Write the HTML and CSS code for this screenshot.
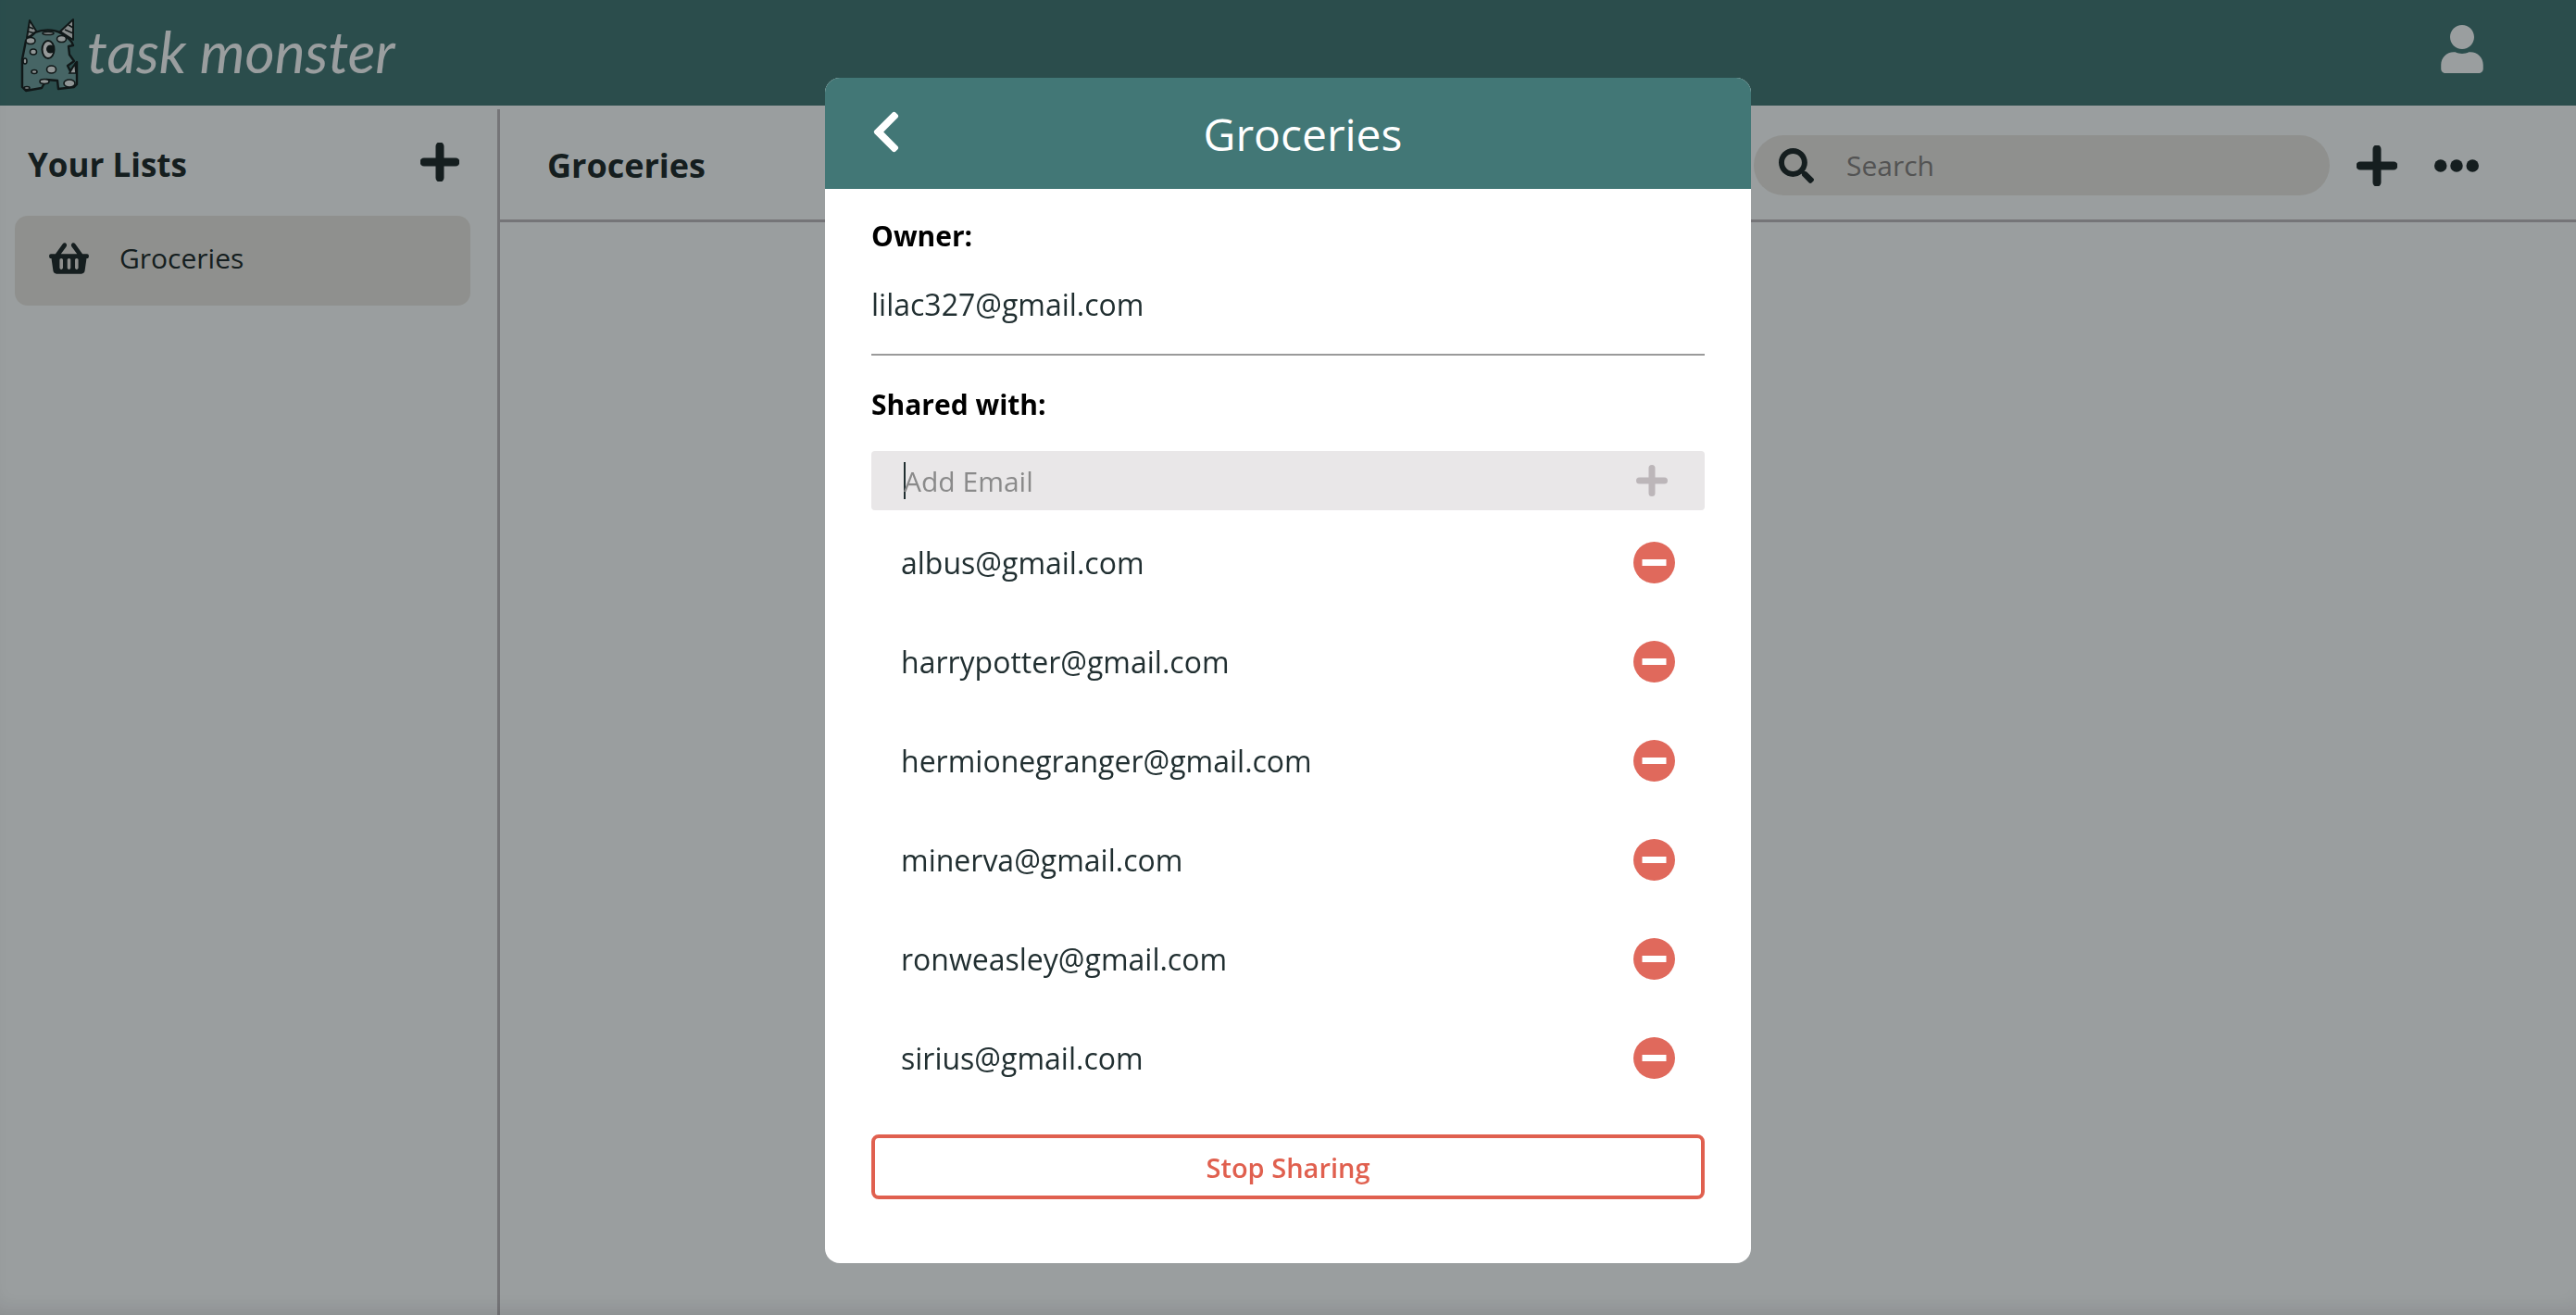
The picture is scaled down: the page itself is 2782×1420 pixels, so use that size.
FILE: index.html
```html
<!DOCTYPE html>
<html lang="en">
<head>
    <meta charset="UTF-8">
    <meta name="viewport" content="width=device-width, initial-scale=1.0">
    <title>Task Monster</title>
    <link rel="stylesheet" href="styles.css">
</head>
<body>
    <header class="topbar">
        <div class="brand">
            <svg class="monster" viewBox="20 10 66 84" width="66" height="84">
                <!-- horns -->
                <path d="M29 34 L32 15 L40 28 Z" fill="#cfd6d6" stroke="#1a2526" stroke-width="2" stroke-linejoin="round"/>
                <path d="M65 27 L79 14 L79 36 Z" fill="#cfd6d6" stroke="#1a2526" stroke-width="2" stroke-linejoin="round"/>
                <path d="M31 22 L36 24 M30 27 L38 29 M74 20 L79 23 M70 25 L79 29" stroke="#1a2526" stroke-width="1.5"/>
                <!-- body -->
                <path d="M38 28 C45 25 58 24 66 29 C73 33 78 37 79 42 L74 43 L75 52 L80 59 L73 64 L76 70 L83 60 L83 84 L80 87 L63 89 L62 80 L50 79 L45 88 L28 91 L24 87 L24 57 L28 37 Z" fill="#6c9c9b" stroke="#1a2526" stroke-width="2.4" stroke-linejoin="round"/>
                <!-- spots -->
                <g fill="#dfe6e6" stroke="#1a2526" stroke-width="1.6">
                    <ellipse cx="66.500" cy="35" rx="5" ry="3.500"/>
                    <ellipse cx="33" cy="37" rx="5" ry="3.500"/>
                    <ellipse cx="36" cy="49" rx="3.500" ry="3"/>
                    <ellipse cx="37" cy="70.500" rx="3" ry="2"/>
                    <ellipse cx="55.500" cy="68" rx="5" ry="4"/>
                    <ellipse cx="48" cy="81" rx="5" ry="2.500"/>
                    <ellipse cx="75" cy="83" rx="6" ry="4"/>
                    <ellipse cx="27" cy="59" rx="2" ry="3"/>
                    <ellipse cx="29" cy="88" rx="3" ry="1.500"/>
                    <ellipse cx="52" cy="29" rx="6" ry="1.500"/>
                    <path d="M75 72 L81 62 L82 72 Z"/>
                </g>
                <!-- eye -->
                <ellipse cx="52" cy="46.500" rx="6.500" ry="9.500" fill="#e6ecec" stroke="#1a2526" stroke-width="2"/>
                <circle cx="54.500" cy="46" r="4.500" fill="#1a2526"/>
            </svg>
            <span class="brand-name">task monster</span>
        </div>
        <svg class="icon-user" viewBox="0 0 448 512" width="46" height="52">
            <path d="M224 256c70.700 0 128-57.300 128-128S294.700 0 224 0 96 57.300 96 128s57.300 128 128 128zm89.600 32h-16.700c-22.200 10.200-46.900 16-72.900 16s-50.600-5.800-72.900-16h-16.700C60.200 288 0 348.200 0 422.400V464c0 26.500 21.500 48 48 48h352c26.500 0 48-21.500 48-48v-41.600c0-74.200-60.200-134.400-134.400-134.400z"/>
        </svg>
    </header>

    <div class="layout">
        <aside class="sidebar">
            <div class="sidebar-head">
                <h2>Your Lists</h2>
                <svg class="icon-plus" viewBox="0 0 42 42" width="42" height="42"><path d="M21 4V38M4 21H38"/></svg>
            </div>
            <div class="list-item">
                <svg class="icon-basket" viewBox="0 0 576 512" width="43" height="38">
                    <path d="M576 216v16c0 13.255-10.745 24-24 24h-8l-26.113 182.788C514.509 462.435 494.257 480 470.370 480H105.630c-23.887 0-44.139-17.565-47.518-41.212L32 256h-8c-13.255 0-24-10.745-24-24v-16c0-13.255 10.745-24 24-24h67.341l106.780-146.821c10.395-14.292 30.407-17.453 44.701-7.058 14.293 10.395 17.453 30.408 7.058 44.701L170.477 192h235.046L326.120 82.821c-10.395-14.292-7.234-34.306 7.059-44.701 14.291-10.395 34.306-7.235 44.701 7.058L484.659 192H552c13.255 0 24 10.745 24 24zM312 392V280c0-13.255-10.745-24-24-24s-24 10.745-24 24v112c0 13.255 10.745 24 24 24s24-10.745 24-24zm112 0V280c0-13.255-10.745-24-24-24s-24 10.745-24 24v112c0 13.255 10.745 24 24 24s24-10.745 24-24zm-224 0V280c0-13.255-10.745-24-24-24s-24 10.745-24 24v112c0 13.255 10.745 24 24 24s24-10.745 24-24z"/>
                </svg>
                <span>Groceries</span>
            </div>
        </aside>

        <main class="main">
            <div class="main-head">
                <h2>Groceries</h2>
                <div class="tools">
                    <div class="search">
                        <svg class="icon-search" viewBox="0 0 512 512" width="38" height="38">
                            <path d="M505 442.700L405.300 343c-4.500-4.500-10.600-7-17-7H372c27.600-35.300 44-79.700 44-128C416 93.100 322.900 0 208 0S0 93.100 0 208s93.100 208 208 208c48.300 0 92.700-16.400 128-44v16.300c0 6.400 2.500 12.500 7 17l99.700 99.700c9.400 9.400 24.600 9.400 33.900 0l28.300-28.300c9.400-9.400 9.400-24.600.1-34zM208 336c-70.700 0-128-57.200-128-128 0-70.700 57.200-128 128-128 70.700 0 128 57.200 128 128 0 70.700-57.200 128-128 128z"/>
                        </svg>
                        <span>Search</span>
                    </div>
                    <svg class="icon-plus" viewBox="0 0 44 44" width="44" height="44"><path d="M22 4V40M4 22H40"/></svg>
                    <svg class="icon-dots" viewBox="0 0 512 144" width="48" height="14">
                        <circle cx="72" cy="72" r="72"/><circle cx="256" cy="72" r="72"/><circle cx="440" cy="72" r="72"/>
                    </svg>
                </div>
            </div>
        </main>
    </div>

    <div class="backdrop">
        <div class="modal">
            <div class="modal-head">
                <svg class="icon-back" viewBox="0 0 320 512" width="32" height="51">
                    <path d="M34.520 239.030L228.870 44.690c9.370-9.370 24.570-9.370 33.940 0l22.670 22.670c9.360 9.360 9.380 24.520.04 33.900L131.490 256l154.020 154.750c9.340 9.380 9.320 24.540-.04 33.900l-22.670 22.670c-9.370 9.370-24.570 9.370-33.940 0L34.520 272.970c-9.370-9.370-9.370-24.570 0-33.940z"/>
                </svg>
                <h3>Groceries</h3>
            </div>
            <div class="modal-body">
                <div class="label owner-label">Owner:</div>
                <div class="owner-email">lilac327@gmail.com</div>
                <hr class="divider">
                <div class="label">Shared with:</div>
                <div class="add-email">
                    <span class="caret"></span>
                    <span class="placeholder">Add Email</span>
                    <svg class="icon-add" viewBox="0 0 34 34" width="34" height="34"><path d="M17 3.500V30.500M3.500 17H30.500"/></svg>
                </div>
                <ul class="shared-list">
                    <li><span>albus@gmail.com</span><svg class="icon-remove" viewBox="0 0 45 45" width="45" height="45"><circle cx="22.500" cy="22.500" r="22.500"/><rect x="9.500" y="19" width="26" height="7"/></svg></li>
                    <li><span>harrypotter@gmail.com</span><svg class="icon-remove" viewBox="0 0 45 45" width="45" height="45"><circle cx="22.500" cy="22.500" r="22.500"/><rect x="9.500" y="19" width="26" height="7"/></svg></li>
                    <li><span>hermionegranger@gmail.com</span><svg class="icon-remove" viewBox="0 0 45 45" width="45" height="45"><circle cx="22.500" cy="22.500" r="22.500"/><rect x="9.500" y="19" width="26" height="7"/></svg></li>
                    <li><span>minerva@gmail.com</span><svg class="icon-remove" viewBox="0 0 45 45" width="45" height="45"><circle cx="22.500" cy="22.500" r="22.500"/><rect x="9.500" y="19" width="26" height="7"/></svg></li>
                    <li><span>ronweasley@gmail.com</span><svg class="icon-remove" viewBox="0 0 45 45" width="45" height="45"><circle cx="22.500" cy="22.500" r="22.500"/><rect x="9.500" y="19" width="26" height="7"/></svg></li>
                    <li><span>sirius@gmail.com</span><svg class="icon-remove" viewBox="0 0 45 45" width="45" height="45"><circle cx="22.500" cy="22.500" r="22.500"/><rect x="9.500" y="19" width="26" height="7"/></svg></li>
                </ul>
                <button class="stop-sharing">Stop Sharing</button>
            </div>
        </div>
    </div>
</body>
</html>
```

FILE: styles.css
```css
* {
    box-sizing: border-box;
}

body {
    font-family: "Open Sans", sans-serif;
    background-color: #edf3f5;
    color: #212f31;
    margin: 0;
    height: 100vh;
    overflow: hidden;
}

h2, h3 {
    margin: 0;
}

.topbar {
    height: 114px;
    background-color: #427776;
    display: flex;
    align-items: center;
    justify-content: space-between;
    padding: 0 100px 0 20px;
}

.brand {
    display: flex;
    align-items: center;
    gap: 8px;
}

.monster {
    margin-top: 4px;
}

.brand-name {
    font-family: "Lato", sans-serif;
    font-style: italic;
    font-weight: 400;
    font-size: 62px;
    line-height: 80px;
    color: #edf3f5;
    margin-top: -4px;
}

.icon-user {
    fill: #edf3f5;
    margin-top: -8px;
}

.layout {
    display: flex;
    height: calc(100vh - 114px);
}

.sidebar {
    width: 540px;
    border-right: 3px solid #b4b4b9;
    margin-top: 4px;
    padding: 0 16px 0 16px;
}

.sidebar-head {
    height: 115px;
    display: flex;
    align-items: center;
    justify-content: space-between;
    padding: 0 25px 0 14px;
}

.sidebar-head h2 {
    font-size: 35px;
    font-weight: 700;
    margin-top: 3px;
}

.main-head h2 {
    font-size: 36px;
    font-weight: 700;
}

.sidebar-head .icon-plus {
    margin-top: -1px;
}

.list-item {
    height: 97px;
    width: 492px;
    background-color: #dcdeda;
    border-radius: 14px;
    display: flex;
    align-items: center;
    gap: 33px;
    padding: 0 0 6px 37px;
    font-size: 30px;
}

.icon-basket, .icon-search, .icon-dots {
    fill: #212f31;
}

.icon-plus path {
    fill: none;
    stroke: #212f31;
    stroke-width: 9px;
    stroke-linecap: round;
}

.main {
    flex: 1;
}

.main-head {
    height: 126px;
    border-bottom: 3px solid #b4b4b9;
    display: flex;
    align-items: center;
    justify-content: space-between;
    padding: 6px 105px 0 51px;
}

.tools {
    display: flex;
    align-items: center;
}

.search {
    width: 622px;
    height: 65px;
    border-radius: 33px;
    background-color: #dcdeda;
    display: flex;
    align-items: center;
    gap: 35px;
    padding-left: 27px;
    font-size: 30px;
    color: #808080;
    margin-right: 29px;
}

.tools .icon-dots {
    margin-left: 40px;
}

.backdrop {
    position: fixed;
    inset: 0;
    background-color: rgba(0, 0, 0, 0.35);
    box-shadow: inset 0 -16px 24px -12px rgba(0, 0, 0, 0.12);
    display: flex;
    justify-content: center;
    align-items: flex-start;
    padding-top: 84px;
}

.modal {
    width: 1000px;
    height: 1280px;
    background: white;
    border-radius: 16px;
    overflow: hidden;
}

.modal-head {
    height: 120px;
    background-color: #427776;
    position: relative;
    display: flex;
    align-items: center;
    justify-content: center;
}

.modal-head h3 {
    font-size: 48px;
    font-weight: 400;
    color: white;
    margin-left: 32px;
}

.icon-back {
    position: absolute;
    left: 50px;
    top: 33px;
    fill: white;
}

.modal-body {
    padding: 0 50px;
}

.label {
    font-size: 30px;
    font-weight: 700;
    line-height: 44px;
    color: black;
}

.owner-label {
    padding-top: 29px;
    height: 73px;
}

.owner-email {
    font-size: 32px;
    line-height: 44px;
    margin-top: 30px;
}

.divider {
    border: none;
    height: 2px;
    background-color: #9a9a9a;
    margin: 31px 0 31px;
}

.add-email {
    height: 64px;
    margin-top: 28px;
    background-color: #e9e7e8;
    border-radius: 4px;
    display: flex;
    align-items: center;
    padding: 0 40px 0 35px;
    font-size: 30px;
    color: #8a8a8a;
}

.caret {
    width: 2px;
    height: 40px;
    margin-right: -2px;
    background-color: #212f31;
}

.placeholder {
    flex: 1;
}

.icon-add path {
    fill: none;
    stroke: #bcb6b9;
    stroke-width: 7px;
    stroke-linecap: round;
}

.shared-list {
    list-style: none;
    margin: 3px 0 0;
    padding: 0;
}

.shared-list li {
    height: 107px;
    display: flex;
    align-items: center;
    justify-content: space-between;
    padding: 0 32px;
    font-size: 32px;
}

.icon-remove circle {
    fill: #e0695c;
}

.icon-remove rect {
    fill: white;
}

.stop-sharing {
    display: block;
    width: 100%;
    height: 70px;
    margin-top: 29px;
    background: white;
    border: 4px solid #e0604f;
    border-radius: 8px;
    font-family: inherit;
    font-size: 29px;
    font-weight: 600;
    color: #e0604f;
}
```
